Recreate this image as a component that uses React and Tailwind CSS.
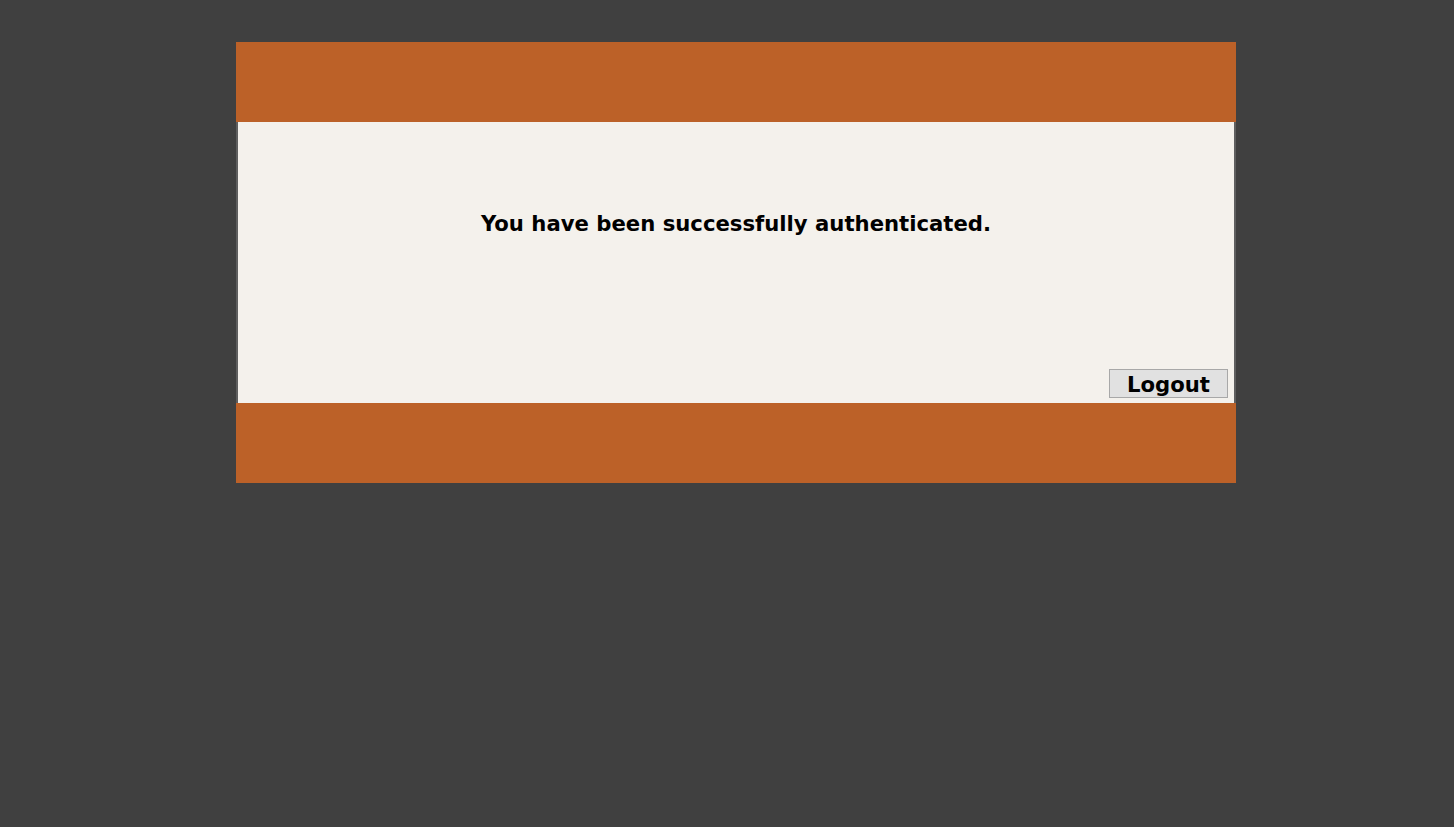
export default function App() {
  return (
    <div className="min-h-screen bg-[#404040] pt-[42px] font-['DejaVu_Sans',Verdana,sans-serif]">
      <div className="w-[1000px] ml-[236px]">
        <div className="h-[80px] bg-[#bc6128]" />
        <div className="h-[281px] bg-[#f4f1ec] border-x-2 border-[#5f5f5f] flex flex-col">
          <p className="pt-[89px] text-center text-[21.2px] font-bold text-black leading-[25px]">
            You have been successfully authenticated.
          </p>
          <div className="mt-auto flex justify-end pr-[6px] pb-[5px]">
            <button className="w-[119px] h-[29px] pt-[2px] bg-[#e1e1e1] border border-[#a8a8a8] text-[21.2px] font-bold text-black leading-none">
              Logout
            </button>
          </div>
        </div>
        <div className="h-[80px] bg-[#bc6128]" />
      </div>
    </div>
  );
}
